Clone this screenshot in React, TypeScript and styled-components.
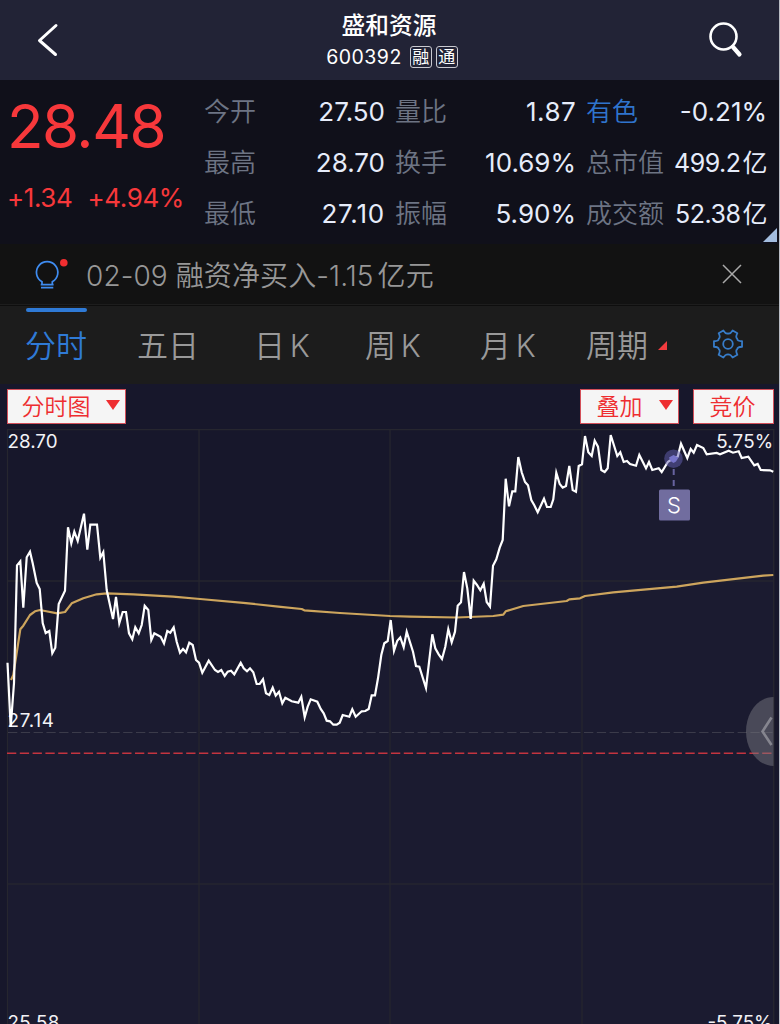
import React from "react";
import styled, { createGlobalStyle } from "styled-components";

const FONT = `Inter, "Noto Sans CJK SC", sans-serif`;

const GlobalStyle = createGlobalStyle`
  * { box-sizing: border-box; }
  body { margin: 0; background: #17172b; overflow: hidden; }
`;

const Screen = styled.main`
  width: 780px;
  height: 1024px;
  overflow: hidden;
  display: flex;
  flex-direction: column;
  background: #17172b;
  border-right: 1px solid #b9bcc4;
  font-family: ${FONT};
  color: #e9edf8;
  white-space: nowrap;
`;

const Header = styled.header`
  height: 80px;
  flex: none;
  display: grid;
  grid-template-columns: 96px 1fr 96px;
  background: #222336;
`;

const HeaderButton = styled.button<{ $inset?: number }>`
  border: 0;
  padding: 0 ${(p) => p.$inset ?? 0}px 0 0;
  background: none;
  display: flex;
  align-items: center;
  justify-content: center;
`;

const TitleBlock = styled.div`
  display: flex;
  flex-direction: column;
  align-items: center;
  padding: 10px 0 0 5px;
  color: #fff;
`;

const StockName = styled.h1`
  margin: 0 6px 0 0;
  font-size: 23.7px;
  line-height: 32px;
  font-weight: 500;
`;

const CodeLine = styled.div`
  display: flex;
  align-items: center;
  height: 30px;
  font-size: 19.5px;
  letter-spacing: 0.5px;
`;

const Tag = styled.span<{ $gap: number }>`
  width: 22px;
  height: 22px;
  margin-left: ${(p) => p.$gap}px;
  border: 1px solid #c9c9d0;
  border-radius: 3px;
  font-size: 17px;
  line-height: 21px;
  letter-spacing: 0;
  text-align: center;
`;

const Quote = styled.section`
  position: relative;
  height: 164px;
  flex: none;
  display: flex;
  background: #10101a;
`;

const PriceBlock = styled.div`
  width: 204px;
  padding: 9px 0 0 7px;
  color: #f7383b;
`;

const Price = styled.div`
  font-size: 60px;
  line-height: 74px;
  letter-spacing: -1.5px;
`;

const Change = styled.div`
  display: flex;
  gap: 15px;
  margin-top: 19px;
  font-size: 26px;
  line-height: 32px;
  letter-spacing: -0.4px;
`;

const Stats = styled.dl`
  margin: 0;
  padding-top: 6px;
  display: grid;
  grid-template-columns: 181px 181px 181px;
  grid-auto-rows: 51px;
  column-gap: 10px;
`;

const Stat = styled.div`
  display: flex;
  justify-content: space-between;
  align-items: center;
`;

const StatLabel = styled.dt<{ $link?: boolean }>`
  font-size: 26px;
  font-weight: 350;
  line-height: 50px;
  color: ${(p) => (p.$link ? "#2f74cd" : "#6d7484")};
`;

const StatValue = styled.dd<{ $spacing?: number; $compact?: boolean }>`
  margin: 0;
  font-size: ${(p) => (p.$compact ? 25 : 26)}px;
  letter-spacing: ${(p) => p.$spacing ?? 0}px;
  line-height: 50px;
  color: #e6ecfa;
`;

const Unit = styled.span<{ $gap: number }>`
  margin-left: ${(p) => p.$gap}px;
`;

const ExpandCorner = styled.i`
  position: absolute;
  right: 2px;
  bottom: 2px;
  border-left: 14px solid transparent;
  border-bottom: 14px solid #a3bddf;
`;

const Notice = styled.section`
  height: 61px;
  flex: none;
  display: flex;
  align-items: center;
  padding: 0 36px 0 34px;
  background: #121212;
  border-bottom: 1px solid #1d1d1d;
`;

const NoticeText = styled.p`
  flex: 1;
  margin: 0 0 0 16px;
  padding-top: 4px;
  font-size: 28px;
  line-height: 40px;
  font-weight: 350;
  letter-spacing: 0.1px;
  color: #979797;
`;

const Tabs = styled.nav`
  height: 79px;
  flex: none;
  display: flex;
  background: #1c1c1c;
  padding: 2px 0 0 26px;
  border-top: 1px solid #0e0e0e;
`;

const Tab = styled.button<{ $width: number; $active?: boolean }>`
  width: ${(p) => p.$width}px;
  padding: 0;
  border: 0;
  background: none;
  display: flex;
  flex-direction: column;
  align-items: flex-start;
  font-family: ${FONT};
  font-size: 31px;
  font-weight: 350;
  line-height: 60px;
  word-spacing: -4px;
  color: ${(p) => (p.$active ? "#2f7ad6" : "#999")};

  &::before {
    content: "";
    width: 61px;
    height: 4px;
    border-radius: 2px;
    background: ${(p) => (p.$active ? "#2f7ad6" : "transparent")};
  }
`;

const TabText = styled.span`
  display: flex;
  align-items: center;
  gap: 10px;
  margin: 4px 0 0 -1px;
`;

const TabCorner = styled.i`
  border-left: 9px solid transparent;
  border-bottom: 9px solid #f23b3e;
  margin-bottom: 2px;
`;

const Settings = styled.div`
  padding-top: 20px;
  margin-left: -1px;
`;

const Toolbar = styled.div`
  height: 45px;
  flex: none;
  display: flex;
  align-items: flex-start;
  gap: 14px;
  padding: 5px 5px 0 7px;
`;

const ToolButton = styled.button<{ $width: number; $inset: number; $push?: boolean }>`
  width: ${(p) => p.$width}px;
  height: 35px;
  margin-left: ${(p) => (p.$push ? "auto" : "0")};
  padding: 1px 5px 0 ${(p) => p.$inset}px;
  display: flex;
  justify-content: space-between;
  align-items: center;
  border: 1px solid #d4505a;
  background: #f5f5f5;
  color: #ee2d30;
  font-family: ${FONT};
  font-size: 23px;
  font-weight: 350;
  line-height: 32px;
`;

const DownArrow = styled.i`
  border: 7px solid transparent;
  border-top: 10px solid #ee2d30;
  border-bottom: 0;
  margin-bottom: 4px;
`;

const Chart = styled.svg`
  display: block;
  flex: none;
`;

interface StatItem {
  label: string;
  value: string;
  unit?: string;
  spacing?: number;
}

const stats: StatItem[] = [
  { label: "今开", value: "27.50" },
  { label: "量比", value: "1.87", spacing: 0.4 },
  { label: "有色", value: "-0.21%" },
  { label: "最高", value: "28.70" },
  { label: "换手", value: "10.69%" },
  { label: "总市值", value: "499.2", unit: "亿", spacing: -0.5 },
  { label: "最低", value: "27.10", spacing: 0.8 },
  { label: "振幅", value: "5.90%" },
  { label: "成交额", value: "52.38", unit: "亿", spacing: -0.5 },
];

const tabs: [string, number][] = [
  ["分时", 112],
  ["五日", 117],
  ["日 K", 111],
  ["周 K", 115],
  ["月 K", 106],
  ["周期", 126],
];

const price =
  "7.5,662.7 10.7,727 14,683 17,565.3 20.3,561.3 23.3,607.7 26.7,557.3 30,551.7 32.7,563.3 36.7,583 39.7,589 42.7,623 45.7,633 49.3,631 52.3,653.3 55.3,647.7 58.7,604 65,590.7 68,527.3 71.3,543.3 74.3,531.7 77.7,541 84,513.7 87.3,549.7 90.3,524.7 97,524.7 100.3,557.7 103.3,552 106.7,590 113,619 116,597 119.3,623.3 122.7,612 126,612 129,633.3 132.3,639.3 135.3,627.3 138.7,633.3 141.7,625 144.7,605.7 148.3,610 151.3,640 154.3,633.3 160.7,636.7 164,643.3 167.3,631 170.3,632.7 173.7,627.3 176.7,641.7 180,652.7 183,649 186,652.3 189.3,642.7 192.7,645 196,660 199,662.7 202.3,672.7 208.7,660.7 215,670 218,672 221.3,670 224.7,676 227.7,671.7 231,670.7 234.3,674.3 240.7,662.7 243.7,668.3 247,671.3 250,668.3 253.3,672.3 256.7,684 259.7,684 263,679.3 266,693.3 269.3,695 272.7,687.7 275.7,695.7 279,691.7 282.3,703.3 285.3,697.7 291.7,701.3 298.3,702.7 301.3,696.7 304.7,717.3 307.7,706.7 310.7,699.3 317.3,701.7 320.7,709 323.7,713.3 326.7,720.7 330,721.3 333.3,724.7 336.7,724.7 339.7,722.7 342.7,715 349.3,716.7 352.3,709.3 355.7,716.7 361.7,711.3 365.3,711 368.7,709 371.7,695.3 375,695.3 378,678.3 381.3,655 384.3,643.3 387.7,641 390.7,620 394,650.7 397.3,640.7 400.3,637.3 403.7,647.3 406.7,631.7 413,651.7 416,666 419.3,666.7 426,688 432.3,634.3 435.3,648.3 438.7,654.3 442,659 445.3,646.7 448.3,629.3 451.7,642.3 455,631.7 457.7,605.7 461,602.3 464,572 467.3,588.3 470.7,619 473.7,580.7 477,585 480.3,590.3 483.7,583.7 486.7,602 490,606.7 493,565.7 496.3,559.3 499.7,547.7 502.7,540 505.7,478.7 509,506.3 512.3,491.3 515.3,491.3 518.3,457 521.7,472.3 525,482 528,485.3 531.3,500 534.3,505.3 537.7,512.3 544,498.7 547,507 550.7,507 553.3,499.3 556.3,472.7 559.7,484 562.7,487.7 566,486 569.3,466 572.7,490 576,491.7 578.7,466 582,464.3 585,436 588.3,452.3 591.7,456 594.7,440.7 598,446.7 601.3,470 604.7,472 607.7,468.3 610.7,435 617.3,456 620.3,452.3 623.7,462 627,461 630,464 636,465.7 639.3,455 646,468.3 649,462 652.3,470 658.7,468.3 661.7,472 668,461.7 673.7,458.3 677.7,456.7 681,443.7 687.3,458 690.7,449 693.7,452.7 697,445 703.3,448 706.7,454.3 716.7,453 720,454.3 728.7,450.7 733,452.7 738.7,451.3 741.7,458 748.3,456.7 754.3,465.3 757.7,464 760.7,470 770,470.3 773.3,471.7";

const average =
  "11,680 13.3,675 20.3,629.3 23.3,625.7 30,615 35,611.3 40,610 45,611 57.3,613.3 65,612 71.7,603.3 83.3,598.3 96.7,594.3 106.7,593.3 133.3,594.3 173,596.7 200,599 243.3,602.8 278.3,606.7 301.7,609 304.3,610.3 340,613 390,616 410,616.7 456.7,617.5 493.3,616 503.3,614.7 505.7,611.3 523.3,606 566.7,601 569.3,599.3 580,598.3 585,596 613.3,592.3 676.7,586.7 703.3,582.7 763.3,575.7 773.3,575";

const polar = (radius: number, degrees: number) => {
  const a = (degrees * Math.PI) / 180;
  return `${(radius * Math.cos(a)).toFixed(2)} ${(radius * Math.sin(a)).toFixed(2)}`;
};

// Six-toothed gear outline: a short flat tooth, then a concave valley.
const gearPath =
  [0, 60, 120, 180, 240, 300]
    .map(
      (a, i) =>
        `${i ? "L" : "M"}${polar(14.3, a - 11)}L${polar(14.3, a + 11)}C${polar(11.2, a + 15)} ${polar(10, a + 22)} ${polar(10.6, a + 30)}C${polar(10, a + 38)} ${polar(11.2, a + 45)} ${polar(14.3, a + 49)}`
    )
    .join("") + "Z";

function PriceChart() {
  return (
    <Chart width="779" height="595" viewBox="0 429 779 595" fontFamily={FONT}>
      <polygon points={`7.5,1024 ${price} 773.3,1024`} fill="#1b1b30" />
      <g stroke="#26262f" strokeWidth="1.3" fill="none">
        <path d="M7.5 1024V429.7H773.7V1024" />
        <path d="M199 430V1024M390 430V1024M582 430V1024" />
        <path d="M8 581H773M8 884H773" />
      </g>
      <path d="M8 732.5H773" stroke="#3b3b4a" strokeDasharray="9.3 3.5" />
      <path d="M7 753.3H773" stroke="#c4343f" strokeWidth="1.4" strokeDasharray="9.3 3.5" />
      <g fill="#f2f2f6" fontSize="18.8">
        <text x="7.5" y="448">28.70</text>
        <text x="7.5" y="727" letterSpacing=".8">27.14</text>
        <text x="7.5" y="1029" letterSpacing=".3">25.58</text>
        <text x="773.5" y="448" textAnchor="end" letterSpacing=".2">5.75%</text>
        <text x="772.5" y="1029" textAnchor="end">-5.75%</text>
      </g>
      <polyline points={average} fill="none" stroke="#cda55d" strokeWidth="2.2" strokeLinejoin="round" />
      <polyline points={price} fill="none" stroke="#fff" strokeWidth="2.2" strokeLinejoin="miter" strokeMiterlimit="5" />
      <circle cx="673.5" cy="458.7" r="9.3" fill="#6661b4" fillOpacity=".5" />
      <path d="M669 457.5L673.5 455L678.5 457.5L676 461.5L673.5 463L670.5 461Z" fill="#7774ca" />
      <path d="M673.7 469V487" stroke="#67639f" strokeWidth="2" strokeDasharray="6 5" />
      <rect x="659" y="489.5" width="31" height="31" rx="1.5" fill="#716d9f" />
      <text x="674" y="513" fontSize="22" fontWeight="300" fill="#fff" textAnchor="middle">S</text>
      <path d="M773.5 697C758 697 746 713 746 731.5S758 766 773.5 766Z" fill="#777780" fillOpacity=".5" />
      <path d="M771.5 717.5L762.5 731.5L771.5 745" fill="none" stroke="#85858f" strokeWidth="2.6" />
    </Chart>
  );
}

export default function App() {
  return (
    <Screen>
      <GlobalStyle />
      <Header>
        <HeaderButton aria-label="返回">
          <svg width="24" height="36" viewBox="0 0 24 36" fill="none" stroke="#fff" strokeWidth="3" strokeLinecap="round" strokeLinejoin="round">
            <path d="M20 3.5L3.5 18.5L19.5 32.5" />
          </svg>
        </HeaderButton>
        <TitleBlock>
          <StockName>盛和资源</StockName>
          <CodeLine>
            600392
            <Tag $gap={8}>融</Tag>
            <Tag $gap={4}>通</Tag>
          </CodeLine>
        </TitleBlock>
        <HeaderButton aria-label="搜索" $inset={9}>
          <svg width="40" height="40" viewBox="0 0 40 40" fill="none" stroke="#fff" strokeLinecap="round">
            <circle cx="16.5" cy="16.5" r="13" strokeWidth="2.6" />
            <path d="M26 27L32.5 34.5" strokeWidth="4.2" />
          </svg>
        </HeaderButton>
      </Header>

      <Quote>
        <PriceBlock>
          <Price>28.48</Price>
          <Change>
            <span>+1.34</span>
            <span>+4.94%</span>
          </Change>
        </PriceBlock>
        <Stats>
          {stats.map(({ label, value, unit, spacing }) => (
            <Stat key={label}>
              <StatLabel $link={label === "有色"}>{label}</StatLabel>
              <StatValue $spacing={spacing} $compact={!!unit}>
                {value}
                {unit && <Unit $gap={2}>{unit}</Unit>}
              </StatValue>
            </Stat>
          ))}
        </Stats>
        <ExpandCorner />
      </Quote>

      <Notice>
        <svg width="36" height="34" viewBox="34 257 36 34" fill="none" stroke="#3f8cf0" strokeWidth="1.7">
          <path d="M42 284.5V281.8A10.7 10.7 0 1 1 52.3 281.8V284.5M40.7 284.6H53.6M41 287.7H53.3" />
          <circle cx="63.8" cy="262.8" r="3.8" fill="#f12e30" stroke="none" />
        </svg>
        <NoticeText>
          02-09 融资净买入-1.15<Unit $gap={4}>亿元</Unit>
        </NoticeText>
        <svg width="22" height="22" viewBox="0 0 22 22" stroke="#aaa" strokeWidth="1.5">
          <path d="M2 2L20 20M20 2L2 20" />
        </svg>
      </Notice>

      <Tabs>
        {tabs.map(([label, width], i) => (
          <Tab key={label} $width={width} $active={i === 0}>
            <TabText>
              {label}
              {label === "周期" && <TabCorner />}
            </TabText>
          </Tab>
        ))}
        <Settings>
          <svg width="32" height="32" viewBox="-16 -16 32 32" fill="none" stroke="#377cc8" strokeWidth="1.8" strokeLinejoin="round">
            <circle r="4.8" />
            <path d={gearPath} />
          </svg>
        </Settings>
      </Tabs>

      <Toolbar>
        <ToolButton $width={119} $inset={13.5}>
          分时图
          <DownArrow />
        </ToolButton>
        <ToolButton $width={99} $inset={15.5} $push>
          叠加
          <DownArrow />
        </ToolButton>
        <ToolButton $width={81} $inset={15.5}>
          竞价
        </ToolButton>
      </Toolbar>
      <PriceChart />
    </Screen>
  );
}
